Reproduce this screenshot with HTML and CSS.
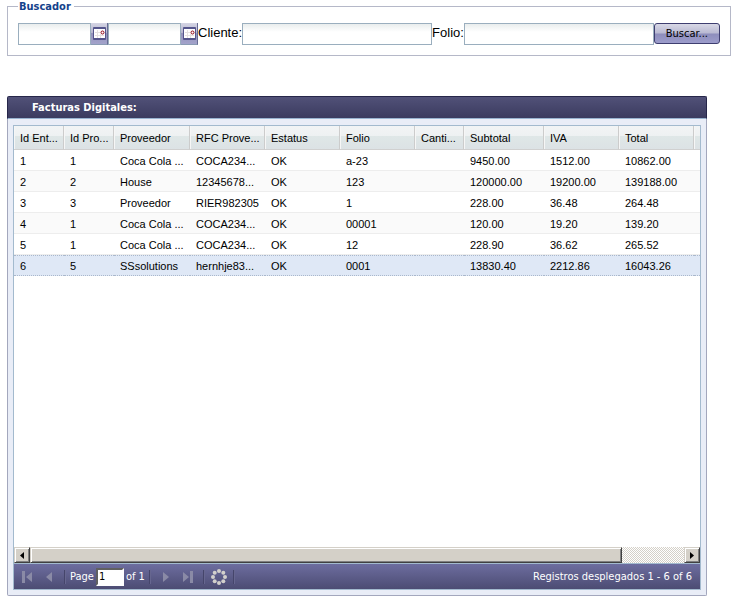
FILE: index.html
```
<!DOCTYPE html>
<html lang="es">
<head>
  <meta charset="UTF-8">
  <title>Facturas Digitales</title>
  <link rel="stylesheet" href="styles.css">
</head>
<body>

<form class="search">
  <fieldset class="search-box">
    <legend>Buscador</legend>
    <div class="search-row">
      <input type="text" class="field date" aria-label="Fecha inicial">
      <button type="button" class="trigger" aria-label="Elegir fecha inicial">
        <svg width="13" height="13" viewBox="0 0 13 13"><rect width="13" height="13" rx="1" fill="#55558c"/><path d="M1 2h11v9H1z" fill="#fff"/><path d="M4.500 3v8M7.500 7v4M2 5.500h5M2 8.500h9" stroke="#e6e2e2"/><circle cx="9.500" cy="5.500" r="1.500" fill="#fff" stroke="#900010"/></svg>
      </button>
      <input type="text" class="field date" aria-label="Fecha final">
      <button type="button" class="trigger" aria-label="Elegir fecha final">
        <svg width="13" height="13" viewBox="0 0 13 13"><rect width="13" height="13" rx="1" fill="#55558c"/><path d="M1 2h11v9H1z" fill="#fff"/><path d="M4.500 3v8M7.500 7v4M2 5.500h5M2 8.500h9" stroke="#e6e2e2"/><circle cx="9.500" cy="5.500" r="1.500" fill="#fff" stroke="#900010"/></svg>
      </button>
      <label for="cliente">Cliente:</label>
      <input type="text" class="field text" id="cliente">
      <label for="folio">Folio:</label>
      <input type="text" class="field text" id="folio">
      <button type="button" class="search-btn">Buscar...</button>
    </div>
  </fieldset>
</form>

<div class="panel">
  <h1 class="panel-title">Facturas Digitales:</h1>
  <div class="panel-body">
    <div class="grid">
      <div class="grid-view">
        <table>
          <colgroup>
            <col class="c-id"><col class="c-id"><col class="c-name"><col class="c-std"><col class="c-std"><col class="c-std"><col class="c-qty"><col class="c-sub"><col class="c-std"><col class="c-std"><col>
          </colgroup>
          <thead>
            <tr><th>Id Ent...</th><th>Id Pro...</th><th>Proveedor</th><th>RFC Prove...</th><th>Estatus</th><th>Folio</th><th>Canti...</th><th>Subtotal</th><th>IVA</th><th>Total</th><th></th></tr>
          </thead>
          <tbody>
            <tr><td>1</td><td>1</td><td>Coca Cola ...</td><td>COCA234...</td><td>OK</td><td>a-23</td><td></td><td>9450.00</td><td>1512.00</td><td>10862.00</td><td></td></tr>
            <tr><td>2</td><td>2</td><td>House</td><td>12345678...</td><td>OK</td><td>123</td><td></td><td>120000.00</td><td>19200.00</td><td>139188.00</td><td></td></tr>
            <tr><td>3</td><td>3</td><td>Proveedor</td><td>RIER982305</td><td>OK</td><td>1</td><td></td><td>228.00</td><td>36.48</td><td>264.48</td><td></td></tr>
            <tr><td>4</td><td>1</td><td>Coca Cola ...</td><td>COCA234...</td><td>OK</td><td>00001</td><td></td><td>120.00</td><td>19.20</td><td>139.20</td><td></td></tr>
            <tr><td>5</td><td>1</td><td>Coca Cola ...</td><td>COCA234...</td><td>OK</td><td>12</td><td></td><td>228.90</td><td>36.62</td><td>265.52</td><td></td></tr>
            <tr class="over"><td>6</td><td>5</td><td>SSsolutions</td><td>hernhje83...</td><td>OK</td><td>0001</td><td></td><td>13830.40</td><td>2212.86</td><td>16043.26</td><td></td></tr>
          </tbody>
        </table>
      </div>

      <div class="scrollbar">
        <button type="button" class="scroll-btn" aria-label="Izquierda"><svg width="4" height="7" viewBox="0 0 4 7"><path d="M4 0v7L0 3.500z"/></svg></button>
        <div class="track"><div class="thumb"></div></div>
        <button type="button" class="scroll-btn" aria-label="Derecha"><svg width="4" height="7" viewBox="0 0 4 7"><path d="M0 0v7L4 3.500z"/></svg></button>
      </div>

      <div class="toolbar">
        <button type="button" class="tool" aria-label="Primera"><svg width="10" height="12" viewBox="0 0 10 12"><path d="M0 0h3v12H0zM10 1v10L4 6z"/></svg></button>
        <button type="button" class="tool" aria-label="Anterior"><svg width="10" height="12" viewBox="0 0 10 12"><path d="M8 1v10L2 6z"/></svg></button>
        <span class="sep"></span>
        <label for="page">Page</label>
        <input type="text" id="page" class="page" value="1">
        <span>of 1</span>
        <span class="sep"></span>
        <button type="button" class="tool" aria-label="Siguiente"><svg width="10" height="12" viewBox="0 0 10 12"><path d="M2 1v10L8 6z"/></svg></button>
        <button type="button" class="tool" aria-label="Última"><svg width="10" height="12" viewBox="0 0 10 12"><path d="M7 0h3v12H7zM0 1v10L6 6z"/></svg></button>
        <span class="sep"></span>
        <button type="button" class="tool refresh" aria-label="Actualizar">
          <svg width="16" height="16" viewBox="0 0 16 16"><g fill="#d2d0cc"><circle cx="8" cy="2" r="2"/><circle cx="12.300" cy="3.700" r="2"/><circle cx="14" cy="8" r="2"/><circle cx="12.300" cy="12.300" r="2"/><circle cx="8" cy="14" r="2"/><circle cx="3.700" cy="12.300" r="2"/><circle cx="2" cy="8" r="2"/><circle cx="3.700" cy="3.700" r="2"/></g></svg>
        </button>
        <span class="sep"></span>
        <span class="count">Registros desplegados 1 - 6 of 6</span>
      </div>
    </div>
  </div>
</div>

</body>
</html>
```
FILE: styles.css
```
* {
  box-sizing: border-box;
}
body {
  display: flex;
  flex-direction: column;
  min-height: 100vh;
  margin: 0;
  padding: 0 5px 11px 7px;
  background: #fff;
  color: #000;
  font-family: "Liberation Sans", Arial, sans-serif;
  font-size: 11px;
}
button,
input {
  margin: 0;
  padding: 0;
  font: inherit;
}

/* Search form */
.search-box {
  margin: 0;
  padding: 10px;
  border: 1px solid #b5b8c8;
}
legend {
  padding: 0 3px 0 1px;
  color: #15428b;
  font: bold 11px/13px "DejaVu Sans Condensed", Tahoma, sans-serif;
}
.search-row {
  display: flex;
  align-items: flex-start;
  font-size: 13px;
  line-height: 20px;
}
.field {
  min-width: 0;
  height: 22px;
  padding: 0 3px;
  border: 1px solid #9aaebe;
  background: linear-gradient(#e9eded, #fff 8px);
}
.date {
  flex: 0 1 73px;
}
.text {
  flex: 0 1 190px;
}
.trigger {
  display: flex;
  align-items: center;
  justify-content: center;
  width: 17px;
  height: 22px;
  border: 0;
  border-right: 1px solid #686c94;
  border-bottom: 1px solid #8a9cb4;
  background: linear-gradient(#d5d5e4, #b4b4ce 50%, #9292bb 50%, #a3a3cb);
}
.trigger svg {
  flex: none;
}
.search-btn {
  width: 66px;
  height: 21px;
  border: 1px solid #3e3e70;
  border-radius: 3px;
  background: linear-gradient(#d8d8e6, #b9b9d2 48%, #8e8ebc 52%, #9c9ccb);
  font: 11px/18px "DejaVu Sans Condensed", Tahoma, sans-serif;
}

/* Invoice panel */
.panel {
  display: flex;
  flex: 1;
  flex-direction: column;
  margin: 40px 24px 0 0;
}
.panel-title {
  margin: 0;
  padding: 0 24px;
  border: 1px solid #26264a;
  border-bottom: 1px solid #99b4d0;
  border-radius: 2px 2px 0 0;
  background: linear-gradient(#515178, #3b3b5f);
  color: #fff;
  font: bold 11px/21px "DejaVu Sans Condensed", Tahoma, sans-serif;
}
.panel-body {
  display: flex;
  flex: 1;
  padding: 6px 5px 5px;
  border: 1px solid #a3a7bd;
  border-top: 0;
  border-radius: 0 0 2px 2px;
  background: #e9edf7;
}
.grid {
  display: flex;
  flex: 1;
  flex-direction: column;
  min-width: 0;
  border: 1px solid #a3bace;
  background: #fff;
}
.grid-view {
  flex: 1;
  overflow: hidden;
}
table {
  width: 100%;
  table-layout: fixed;
  border-collapse: separate;
  border-spacing: 0;
}
.c-id {
  width: 50px;
}
.c-name {
  width: 76px;
}
.c-std {
  width: 75px;
}
.c-qty {
  width: 49px;
}
.c-sub {
  width: 80px;
}
th,
td {
  overflow: hidden;
  padding: 0 0 0 6px;
  font-weight: normal;
  text-align: left;
  white-space: nowrap;
}
th {
  height: 24px;
  border-right: 1px solid #ccc;
  border-bottom: 1px solid #d0d0d0;
  box-shadow: inset 1px 0 #f6f6f6;
  background: linear-gradient(#f2f4f5, #eef1f2 42%, #dfe7e7 44%, #dce2e5);
}
th:last-child {
  border-right: 0;
}
td {
  height: 21px;
  padding-top: 2px;
  border-bottom: 1px solid #ededed;
}
tr:nth-child(even) td {
  background: #fafafa;
}
tr.over td {
  padding-top: 1px;
  border-top: 1px dotted #aab8cc;
  border-bottom: 1px dotted #aab8cc;
  background: #dfe8f6;
}

/* Horizontal scrollbar */
.scrollbar {
  display: flex;
  height: 16px;
}
.scroll-btn,
.thumb {
  border: 1px solid #d4d0c8;
  border-right-color: #404040;
  border-bottom-color: #404040;
  background: #d4d0c8;
  box-shadow: inset 1px 1px #fff, inset -1px -1px #808080;
}
.scroll-btn {
  display: flex;
  align-items: center;
  justify-content: center;
  width: 16px;
}
.track {
  flex: 1;
  background: repeating-conic-gradient(#d4d0c8 0 25%, #fff 0 50%) 0 0 / 2px 2px;
}
.thumb {
  width: 90.5%;
  height: 16px;
}

/* Paging toolbar */
.toolbar {
  display: flex;
  align-items: center;
  height: 26px;
  padding: 0 8px 0 2px;
  border-top: 1px solid #a3bace;
  background: linear-gradient(#6d6d9f, #4c4c73);
  color: #fff;
  font: 11px/14px "DejaVu Sans Condensed", Tahoma, sans-serif;
}
.tool {
  display: flex;
  align-items: center;
  justify-content: center;
  width: 22px;
  height: 22px;
  border: 0;
  background: none;
}
.tool path {
  fill: #8a8aa6;
}
.refresh {
  width: 20px;
}
.sep {
  width: 2px;
  height: 14px;
  margin: 0 4px;
  border-left: 1px solid #45456b;
  border-right: 1px solid #66668f;
}
.page {
  width: 28px;
  height: 18px;
  margin: 0 2px;
  padding: 0 1px;
  border: 2px solid #fff;
  border-top-color: #606060;
  border-left-color: #606060;
  background: #fff;
  color: #000;
}
.count {
  margin-left: auto;
}
```
